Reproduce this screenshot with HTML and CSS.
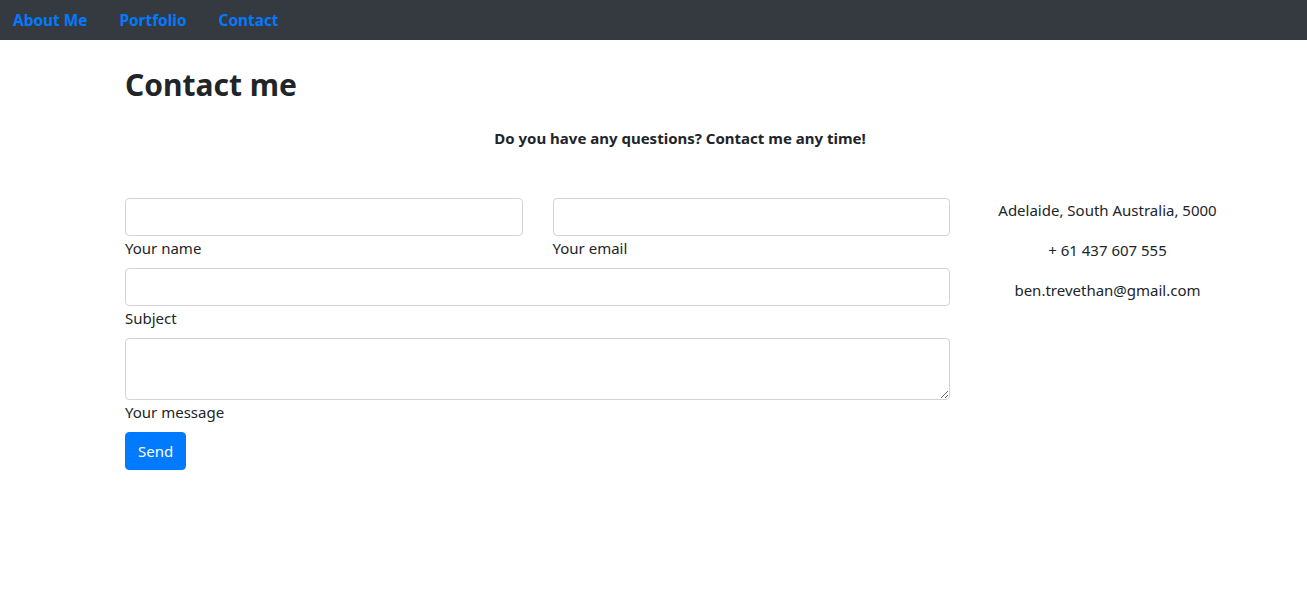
FILE: index.html
```html
<!DOCTYPE html>
<html lang="en">
<head>
<meta charset="utf-8">
<title>Contact me</title>
<link rel="stylesheet" href="styles.css">
</head>
<body>
<nav class="navbar">
  <a class="nav-link" href="#">About Me</a>
  <a class="nav-link" href="#">Portfolio</a>
  <a class="nav-link" href="#">Contact</a>
</nav>
<main class="container">
  <h2 class="title">Contact me</h2>
  <p class="lead">Do you have any questions? Contact me any time!</p>
  <div class="row">
    <form class="form-col">
      <div class="pair">
        <div class="field">
          <input class="control" type="text">
          <label class="label">Your name</label>
        </div>
        <div class="field">
          <input class="control" type="email">
          <label class="label">Your email</label>
        </div>
      </div>
      <div class="field">
        <input class="control" type="text">
        <label class="label">Subject</label>
      </div>
      <div class="field">
        <textarea class="control area" rows="2"></textarea>
        <label class="label">Your message</label>
      </div>
      <button class="btn" type="button">Send</button>
    </form>
    <div class="info-col">
      <p class="info">Adelaide, South Australia, 5000</p>
      <p class="info">+ 61 437 607 555</p>
      <p class="info">ben.trevethan@gmail.com</p>
    </div>
  </div>
</main>
</body>
</html>
```
FILE: styles.css
```css
* { box-sizing: border-box; }
html, body { margin: 0; padding: 0; }
body {
  font-family: "Noto Sans", "Open Sans", sans-serif;
  font-size: 15px;
  line-height: 24px;
  color: #212529;
  background: #fff;
}
.navbar {
  height: 40px;
  background: #343a40;
  display: flex;
  align-items: center;
  gap: 32px;
  padding: 2px 0 0 13px;
}
.nav-link {
  color: #007bff;
  font-weight: 700;
  font-size: 15.4px;
  text-decoration: none;
}
.container {
  width: 1140px;
  margin-left: 110px;
  padding: 0 15px;
}
.title {
  font-size: 30px;
  font-weight: 700;
  line-height: 38px;
  margin: 26px 0 0;
}
.lead {
  text-align: center;
  font-weight: 700;
  font-size: 15px;
  margin: 22px 0 48px;
}
.row {
  display: flex;
  gap: 30px;
}
.form-col {
  width: 825px;
  flex: none;
  display: flex;
  flex-direction: column;
}
.pair {
  display: flex;
  gap: 30px;
}
.pair .field { flex: 1; }
.field {
  display: flex;
  flex-direction: column;
  margin-bottom: 8px;
}
.control {
  display: block;
  width: 100%;
  height: 38px;
  border: 1px solid #ced4da;
  border-radius: 4px;
  padding: 6px 12px;
  font: inherit;
  color: #495057;
  background: #fff;
}
.area {
  height: 62px;
  resize: vertical;
}
.label {
  line-height: 24px;
}
.btn {
  align-self: flex-start;
  height: 38px;
  padding: 0 12px;
  border: 1px solid #007bff;
  border-radius: 4px;
  background: #007bff;
  color: #fff;
  font: inherit;
}
.info-col {
  flex: 1;
  text-align: center;
}
.info {
  margin: 0 0 16px;
}
```
